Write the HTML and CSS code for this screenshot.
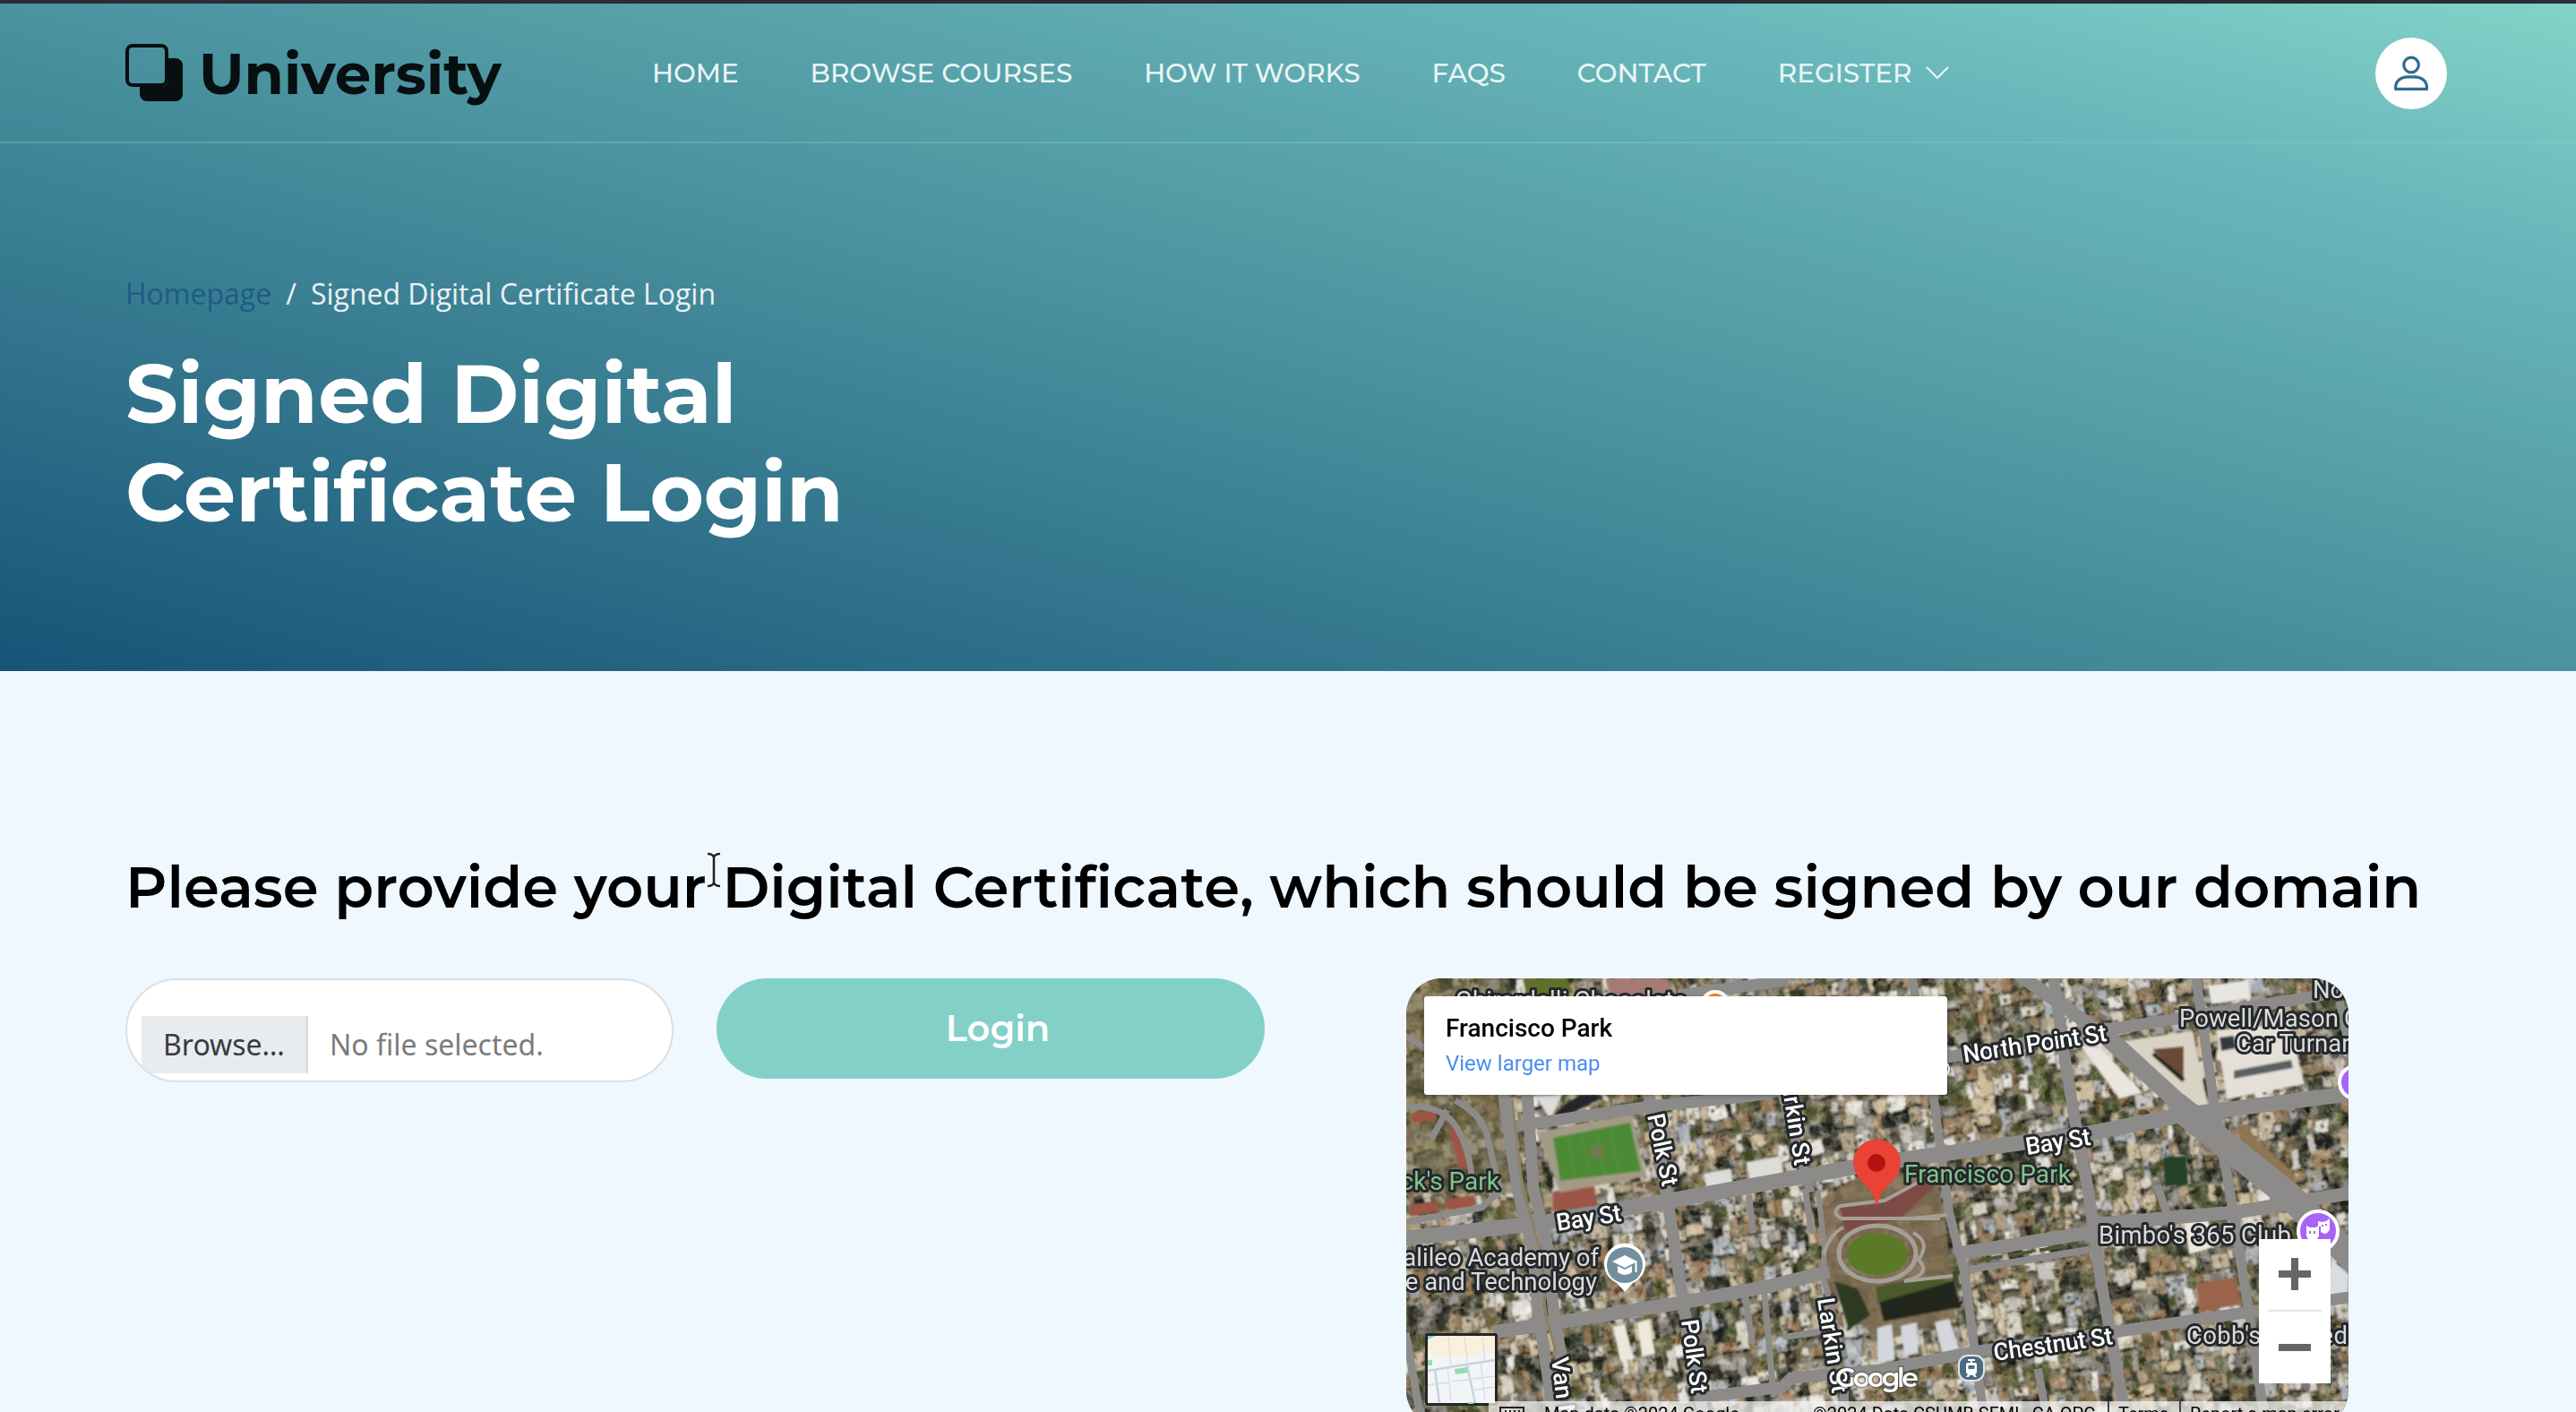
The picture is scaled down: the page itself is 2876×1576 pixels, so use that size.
FILE: index.html
```html
<!DOCTYPE html>
<html lang="en">
<head>
<meta charset="utf-8">
<title>Signed Digital Certificate Login</title>
<link rel="stylesheet" href="styles.css">
</head>
<body>
<div class="hero">
  <header class="header">
    <a class="logo">
      <svg class="logo-mark" width="64" height="64" viewBox="0 0 64 64">
        <rect x="2" y="2" width="44" height="44" rx="6" fill="none" stroke="#070f11" stroke-width="4"/>
        <path d="M48 16h8a8 8 0 0 1 8 8v32a8 8 0 0 1-8 8H24a8 8 0 0 1-8-8v-8h24a8 8 0 0 0 8-8z" fill="#070f11"/>
      </svg>
      <span class="logo-text">University</span>
    </a>
    <nav class="nav">
      <a>HOME</a>
      <a>BROWSE COURSES</a>
      <a>HOW IT WORKS</a>
      <a>FAQS</a>
      <a>CONTACT</a>
      <a class="has-menu">REGISTER
        <svg width="28" height="16" viewBox="0 0 28 16"><path d="M2 2l12 12L26 2" fill="none" stroke="#e9f4f4" stroke-width="2.2"/></svg>
      </a>
    </nav>
    <a class="avatar">
      <svg width="40" height="40" viewBox="0 0 40 40" fill="none" stroke="#2f6b91" stroke-width="3.2">
        <circle cx="20" cy="10.5" r="8.3"/>
        <path d="M2.6 37.4v-2c0-7 6-11.6 13-11.6h8.800c7 0 13 4.600 13 11.600v2z" stroke-linejoin="round"/>
      </svg>
    </a>
  </header>
  <div class="intro">
    <div class="breadcrumb"><a>Homepage</a><span class="slash">/</span><span>Signed Digital Certificate Login</span></div>
    <h1>Signed Digital<br>Certificate Login</h1>
  </div>
</div>

<main class="main">
  <h2>Please provide your Digital Certificate, which should be signed by our domain</h2>
  <div class="row">
    <form class="form">
      <div class="file">
        <span class="file-button">Browse…</span>
        <span class="file-name">No file selected.</span>
      </div>
      <button class="login" type="button">Login</button>
    </form>
    <div class="map">
      <svg class="map-art" width="1052" height="500" viewBox="0 0 1052 500">
        <defs>
          <filter id="grain" x="0" y="0" width="100%" height="100%">
            <feTurbulence type="fractalNoise" baseFrequency="0.09" numOctaves="4" seed="8"/>
            <feColorMatrix values="2.6 0 0 0 -.75  2.5 0 0 0 -.75  2.3 0 0 0 -.75  0 2.6 0 0 -.8"/>
          </filter>
          <filter id="soft"><feGaussianBlur stdDeviation="0.9"/></filter>
          <filter id="ragged" x="0" y="0" width="100%" height="100%">
            <feTurbulence type="fractalNoise" baseFrequency="0.06" numOctaves="2" seed="3" result="n"/>
            <feDisplacementMap in="SourceGraphic" in2="n" scale="7" xChannelSelector="R" yChannelSelector="G"/>
            <feGaussianBlur stdDeviation="0.9"/>
          </filter>
        </defs>
        <rect width="1052" height="500" fill="#6b6551"/>
        <g id="blocks" filter="url(#ragged)"></g>
        <rect width="1052" height="500" filter="url(#grain)" opacity=".4"/>

        <g filter="url(#soft)">
          <path d="M0 0H110L120 240H0z" fill="#6c6340" opacity=".55"/>
          <path d="M130 0h50l6 16-50 8z" fill="#61702a"/>
          <path d="M222 0h70l8 16-70 10z" fill="#a57a74"/>
          <path d="M6 150l26-3 2 12-27 2zM46 162l14 2 10 50-12-4zM164 238l46-6 2 22-48 6zM4 252l30-3 2 12-32 4zM44 246l32-4 2 12-32 5z" fill="#9c5446"/>
          <path d="M464 246l56-34 74 12 14 96 6 60-86 26-62-66z" fill="#7b6a4f" opacity=".85"/>
          <path d="M484 256l44-6 64-36 4 12-44 42-60 16z" fill="#7d4b45"/>
          <path d="M527 357l84-20 8 30-86 16z" fill="#22271c"/>
          <path d="M524 344l60-10 26 4-84 24z" fill="#4b5a2a"/>
          <path d="M526 390l16-4 4 40-20 4zM552 388l18-4 2 34-16 4zM590 384l16-4 12 34-20 4z" fill="#d3d7dc"/>
          <path d="M478 338l26 8 14 30-24 16z" fill="#2d3a22"/>
          <path d="M146 172l106-21 16 70-96 18z" fill="#a39a86"/>
          <path d="M164 178l86-17 12 54-90 11z" fill="#4d8a35"/>
          <path d="M180 176l9 48M196 173l9 48M212 170l9 48M228 167l9 47" stroke="#5a9542" fill="none"/>
          <ellipse cx="213" cy="194" rx="9" ry="7" fill="#74784f"/>
          <path d="M795 71l83-13 18 88-12 2z" fill="#d9d3c5"/>
          <path d="M833 79l35-3v36z" fill="#6a4a34"/>
          <path d="M834 84l34 30" stroke="#26221c" stroke-width="5"/>
          <path d="M752 74l24 4 46 50-26 6z" fill="#e9e6e0"/>
          <path d="M904 58l81-8 18 68-87 17z" fill="#e4e0d8"/>
          <path d="M924 103l64-12 2 9-66 12z" fill="#5a5e60"/>
          <path d="M908 66l16-2 2 14-16 3z" fill="#333b3c"/>
          <path d="M895 8l45-6 3 20-44 7z" fill="#e8e6e2"/>
          <path d="M845 200l26-2 2 32-26 2z" fill="#25402a"/>
          <path d="M882 341l44-8 6 31-46 8z" fill="#9a634c"/>
          <path d="M868 270l26-6 8 36-28 8zM231 389l13-3 10 39-15 2zM258 384l13-3 7 38-15 3z" fill="#ece9dc"/>
          <path d="M380 205l38-7 4 28-38 5zM332 218l30-6 4 22-30 4zM145 132l30-4-14 30z" fill="#dcdcd8"/>
          <path d="M160 158q30-36 60-26l-30 16z" fill="#26282a"/>
          <path d="M1032 312l20 18v30l-22 3z" fill="#d9dde2"/>
          <path d="M928 160l60 54 8 20-14 4-50-46z" fill="#8d7455"/>
        </g>

        <g class="roads" fill="none" stroke="#8c8b8a" stroke-linecap="square">
          <path stroke-width="17" d="M0 290L150 273 300 247 520 207 761 173 864 153 1052 129"/>
          <path stroke-width="15" d="M104 394L169 384 307 362 403 344 465 329"/>
          <path stroke-width="15" d="M623 306L761 284M775 274L926 261 1052 240"/>
          <path stroke-width="8" d="M630 325L760 303"/>
          <path stroke-width="13" d="M334 467L420 456 430 446 530 437 640 416 795 394 950 371 1052 356"/>
          <path stroke-width="13" d="M121 165L272 143 386 131 604 88 792 56 1009 21 1052 12M310 18L420 3"/>
          <path stroke-width="13" d="M108 125L124 235 141 301 148 377 164 484M135 125L142 235 158 301 165 377 173 421"/>
          <path stroke-width="13" d="M272 135L293 254 310 367 331 484"/>
          <path stroke-width="10" d="M420 131L450 234"/>
          <path stroke-width="6" d="M460 240L467 301 465 332 489 420"/>
          <path stroke-width="10" d="M489 450v40"/>
          <path stroke-width="7" d="M379 357L386 404M400 354L410 464M424 400l40-6M383 245l4 36M446 240l6 40"/>
          <path stroke-width="10" d="M565 1L589 135 606 261 623 327 644 484"/>
          <path stroke-width="13" d="M723 1L733 75 747 161 761 235 775 334 802 484"/>
          <path stroke-width="11" d="M882 1L902 141 919 235 940 367 957 484"/>
          <path stroke-width="9" d="M1043 30l12 60M840 235l12 36M0 400l16 90M706 440l8 44"/>
          <path stroke-width="15" d="M690 0L782 65"/>
          <path stroke-width="20" d="M782 65L864 140"/>
          <path stroke-width="30" d="M870 150L985 242 1052 308"/>
          <path stroke-width="7" d="M0 65q40 22 22 26M0 144q40-4 56 22 16 26 18 66M58 138q26 14 32 36l14 60M30 176l14-26M0 272q60-12 84-16l20-18"/>
        </g>
        <path d="M118 135L130 235 149 301 156 377 168 420" stroke="#8b8263" stroke-width="3" fill="none"/>
        <path d="M640 315l110-19" stroke="#4e5733" stroke-width="4" stroke-dasharray="26 8"/>

        <g fill="none" stroke="#a5a097" stroke-width="4">
          <ellipse cx="526" cy="307" rx="43" ry="31" stroke-width="5"/>
          <path d="M484 254q-10 8 2 14h110M484 254l50-6 44-24M564 268l40-4M566 284q20 10 6 30 16 16-16 24l54-6M488 278q-14 6-22 30"/>
        </g>
        <ellipse cx="526" cy="308" rx="34" ry="23" fill="#5a7a28"/>

        <g class="labels">
          <text x="55" y="34" textLength="258">Ghirardelli Chocolate</text>
          <text class="street" transform="translate(623 94) rotate(-8.600)" textLength="162">North Point St</text>
          <text class="street" transform="translate(693 197) rotate(-9)" textLength="73">Bay St</text>
          <text class="street" transform="translate(169 282) rotate(-9)" textLength="73">Bay St</text>
          <text class="street" transform="translate(269 153) rotate(78)" textLength="82">Polk St</text>
          <text class="street" transform="translate(307 382) rotate(82)" textLength="83">Polk St</text>
          <text class="street" transform="translate(417 104) rotate(81)" textLength="107">Larkin St</text>
          <text class="street" transform="translate(459 358) rotate(81)" textLength="107">Larkin St</text>
          <text class="street" transform="translate(162 424) rotate(83)">Van Ness Ave</text>
          <text class="street" transform="translate(657 427) rotate(-8.200)" textLength="134">Chestnut St</text>
          <text class="park" x="104" y="236" text-anchor="end">ck's Park</text>
          <text class="park" x="556" y="228" textLength="186">Francisco Park</text>
          <text x="863" y="54" textLength="178">Powell/Mason</text>
          <text x="1047" y="54">C</text>
          <text x="926" y="82">Car Turnaround</text>
          <text x="1012" y="22">North</text>
          <text x="215" y="321" text-anchor="end">alileo Academy of</text>
          <text x="213" y="348" text-anchor="end">e and Technology</text>
          <text x="773" y="296" textLength="215">Bimbo's 365 Club</text>
          <text x="871" y="408" textLength="180">Cobb's Comed</text>
        </g>

        <circle cx="345" cy="30" r="15" fill="#f58220" stroke="#fff" stroke-width="4"/>
        <circle cx="597" cy="101" r="9" fill="#4f6f86" stroke="#fff" stroke-width="2"/>
        <circle cx="1060" cy="116" r="18" fill="#a864f7" stroke="#fff" stroke-width="4"/>
        <circle cx="1018" cy="282" r="22" fill="#a864f7" stroke="#fff" stroke-width="4"/>
        <path d="M1005 276l4 2h6l4-2v11q-2 6-7 6t-7-6zM1018 271l4 1 5-1 4-3v12q-2 5-6 5l-4-2v-6h-3z" fill="#fff"/>
        <path d="M1009 282v3M1014 282v3M1023 275v2M1027 274v2" stroke="#a864f7" stroke-width="2"/>
        <path d="M244 350l-9-10a23 23 0 1 1 18 0z" fill="#fff"/>
        <circle cx="244" cy="320" r="20" fill="#728f9e"/>
        <path d="M244 309l14 7-14 7-14-7zM236 321l8 4 8-4v7q-8 6-16 0z" fill="#fff"/>
        <path d="M256.500 316v12" stroke="#fff" stroke-width="2"/>
        <rect x="617" y="421" width="28" height="28" rx="10" fill="#4c6a80" stroke="#dfe5e8" stroke-width="2"/>
        <path d="M627 425h8v2h-3v2h3q2 0 2 2v8q0 2-2 3l2 3h-3l-1-2h-4l-1 2h-3l2-3q-2-1-2-3v-8q0-2 2-2h3v-2h-3z" fill="#fff"/>
        <rect x="627.500" y="432" width="7" height="4" fill="#4c6a80"/>

        <path d="M525 255q-2-14-12-24-14-12-14-25a26.500 26.500 0 0 1 53 0q0 13-14 25-10 10-13 24z" fill="#ea4335"/>
        <circle cx="525" cy="206" r="10" fill="#b31412"/>

        <text class="google" x="479" y="456" textLength="93">Google</text>
      </svg>

      <div class="place">
        <strong>Francisco Park</strong>
        <a>View larger map</a>
      </div>

      <svg class="layers" width="81" height="81" viewBox="0 0 81 81">
        <rect width="81" height="81" rx="3" fill="#262626"/>
        <rect x="3" y="3" width="75" height="75" fill="#f3f4f5"/>
        <path d="M3 3h75v20l-12-2-18 6-42-3-3-2z" fill="#faf0dc"/>
        <path d="M3 3h9l-9 4z" fill="#6cd5e8"/>
        <path d="M3 30h5v6H3zM33 40l14-2 1 6-14 2zM48 77h6v2h-6z" fill="#8fdfae"/>
        <path d="M3 42l30-5 45-7M11 40l5 38M47 36l9 42" stroke="#c5d3df" stroke-width="2.500" fill="none"/>
        <path d="M26 4l3 34M44 4l4 34M64 4l3 28M3 58l24-3M25 38l4 38M62 34l5 40M30 54l48-6M52 64l26-4" stroke="#d5dee6" stroke-width="1.300" fill="none"/>
      </svg>

      <div class="zoom">
        <svg width="80" height="161" viewBox="0 0 80 161">
          <path d="M22 39h36M40 21v36M22 121h36" stroke="#666" stroke-width="8"/>
          <path d="M10 80h60" stroke="#e6e6e6" stroke-width="2"/>
        </svg>
      </div>

      <div class="credits">
        <svg width="28" height="16" viewBox="0 0 28 16"><path d="M1 15V1h26v14M6 5h2M11 5h2M16 5h2M21 5h2" fill="none" stroke="#222" stroke-width="2"/></svg>
        <span class="data">Map data ©2024 Google</span>
        <span class="imagery">©2024 Data CSUMB SFML, CA OPC</span>
        <span class="terms">Terms</span>
        <span class="report">Report a map error</span>
      </div>
    </div>
  </div>
</main>

<svg class="cursor" width="20" height="42" viewBox="0 0 20 42">
  <path d="M3 3q6 0 7 4q1-4 7-4M10 7v28M3 39q6 0 7-4q1 4 7 4" fill="none" stroke="#fff" stroke-width="6"/>
  <path d="M3 3q6 0 7 4q1-4 7-4M10 7v28M3 39q6 0 7-4q1 4 7 4" fill="none" stroke="#222" stroke-width="2.600"/>
</svg>
<script src="map.js"></script>
</body>
</html>
```
FILE: styles.css
```css
* { box-sizing: border-box; }

body {
  margin: 0;
  height: 1576px;
  overflow: hidden;
  position: relative;
  background: #eff7ff;
  font-family: "Open Sans", "Noto Sans", sans-serif;
  color: #000;
}

.hero {
  height: 749px;
  border-top: 4px solid #2b2d34;
  background: linear-gradient(to top right, #175478, #4b939f 50%, #6ab8bb 82%, #83d3c8);
}

.header {
  display: flex;
  align-items: center;
  height: 156px;
  padding: 0 144px 0 140px;
  border-bottom: 2px solid rgba(130, 210, 200, .32);
}

.logo { display: flex; align-items: center; gap: 18px; width: 588px; }
.logo-text {
  font: 700 64.200px/80px Montserrat, Inter, sans-serif;
  padding-top: 1px;
  color: #070f11;
}

.nav {
  display: flex;
  align-items: center;
  flex: 1;
  gap: 79.900px;
  font: 500 29.500px/40px Montserrat, Inter, sans-serif;
  color: #eaf5f5;
  white-space: nowrap;
}
.has-menu { display: flex; align-items: center; gap: 15px; }

.avatar {
  display: flex;
  align-items: center;
  justify-content: center;
  width: 80px;
  height: 80px;
  margin-top: 1px;
  border-radius: 50%;
  background: #fff;
}

.intro { padding: 142px 140px 0; }
.breadcrumb {
  display: flex;
  font-size: 32px;
  line-height: 52px;
  color: #e9f1f4;
}
.breadcrumb a { color: #1d5c83; }
.slash { margin: 0 16px; }

h1 {
  margin: 30px 0 0;
  font: 700 92.200px/110px Montserrat, Inter, sans-serif;
  color: #fff;
}

.main { padding: 199px 140px 0; }
h2 {
  margin: 0;
  font: 600 64.060px/84px Montserrat, Inter, sans-serif;
  white-space: nowrap;
}

.row { display: flex; margin-top: 60px; gap: 158px; }
.form { display: flex; gap: 48px; align-items: flex-start; }

.file {
  display: flex;
  align-items: flex-start;
  width: 612px;
  height: 116px;
  padding: 40px 0 0 16px;
  border: 2px solid #d9dfe5;
  border-radius: 58px;
  background: #fff;
  overflow: hidden;
  font: 400 32px/64px "Noto Sans", sans-serif;
}
.file-button {
  width: 186px;
  padding-left: 24px;
  background: #e9ecef;
  border-right: 2px solid #d5dade;
  color: #363b40;
}
.file-name { margin-left: 24px; color: #7b7b7b; }

.login {
  width: 612px;
  height: 112px;
  padding: 0 0 0 16px;
  border: 0;
  border-radius: 56px;
  background: #82d0c7;
  color: #fff;
  font: 600 40px/112px Montserrat, Inter, sans-serif;
}

.map {
  position: relative;
  width: 1052px;
  height: 500px;
  border-radius: 40px;
  overflow: hidden;
  font-family: Roboto, sans-serif;
}
.map-art { display: block; }
.labels {
  font-size: 27.500px;
  fill: #dcdcdc;
  stroke: #24282b;
  stroke-width: 6px;
  stroke-linejoin: round;
  paint-order: stroke;
}
.street { fill: #fff; font-size: 27px; font-weight: 500; }
.park { fill: #82c48c; font-size: 28px; }
.google {
  font: 600 30px Montserrat, Lato, sans-serif;
  fill: #fff;
  stroke: rgba(60, 60, 60, .45);
  stroke-width: 3px;
  paint-order: stroke;
}

.place {
  position: absolute;
  left: 20px;
  top: 20px;
  width: 584px;
  height: 110px;
  padding: 17px 24px;
  border-radius: 3px;
  background: #fff;
  display: flex;
  flex-direction: column;
  box-shadow: 0 1px 4px rgba(0, 0, 0, .3);
}
.place strong { font-size: 28px; line-height: 38px; font-weight: 500; }
.place a { font-size: 24px; line-height: 40px; color: #4a8df0; }

.layers { position: absolute; left: 21px; top: 396px; }

.zoom {
  position: absolute;
  left: 952px;
  top: 291px;
  height: 161px;
  background: #fff;
}

.credits {
  position: absolute;
  left: 92px;
  right: 0;
  bottom: 0;
  height: 28px;
  padding-left: 12px;
  display: flex;
  align-items: center;
  background: rgba(245, 245, 245, .72);
  color: #000;
  font-size: 20px;
  line-height: 28px;
  white-space: nowrap;
}
.data { margin-left: 22px; width: 300px; }
.imagery { width: 329px; }
.terms, .report { padding-left: 10px; border-left: 2px solid #444; }
.terms { width: 80px; }

.cursor { position: absolute; left: 787px; top: 950px; }
```
FILE: map.js
```js
// Fills the city blocks of the aerial map with rooftops, yards and trees.
(function () {
  var seed = 20;
  function rnd() {
    seed = (seed * 16807) % 2147483647;
    return seed / 2147483647;
  }
  var roofs = ['#d8d2c4', '#bfb299', '#a8957a', '#98948c', '#e6e4de', '#9a7b5c', '#7b7770', '#c6c3bd', '#cdbb9a', '#8b7353', '#a9b0b8'];
  var yards = ['#424829', '#2a2b22', '#50552f', '#1f211e', '#6a5f3e', '#34392b'];
  var parts = [];
  function box(x, y, w, h, fill) {
    parts.push('<rect x="' + x.toFixed(1) + '" y="' + y.toFixed(1) + '" width="' + w.toFixed(1) +
      '" height="' + h.toFixed(1) + '" fill="' + fill + '"/>');
  }
  function pick(list) { return list[Math.floor(rnd() * list.length)]; }
  for (var y = -20; y < 680; y += 19) {
    for (var x = -90; x < 1080; ) {
      var w = 5 + rnd() * rnd() * 22;
      var h = 8 + rnd() * 17;
      var dy = y + rnd() * 8 - 4;
      if (rnd() < 0.34) {
        box(x, dy, w + 2, h + 5, pick(yards));
      } else {
        box(x + 3, dy + 3, w, h, '#22231f');
        box(x, dy, w, h, pick(roofs));
        if (rnd() < 0.6) box(x + w * rnd() * 0.6, dy + h * rnd() * 0.7, 4, 4, pick(yards));
      }
      x += w + 1;
    }
  }
  document.getElementById('blocks').innerHTML = '<g transform="rotate(-8.5)">' + parts.join('') + '</g>';
})();
```
